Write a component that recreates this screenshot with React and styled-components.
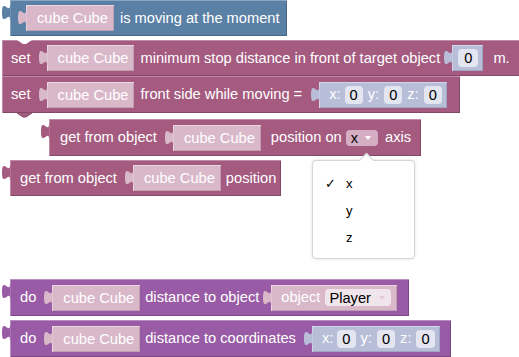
import React from 'react';
import styled, { createGlobalStyle } from 'styled-components';

const palette = {
  blue: { base: '#5b80a5', dark: '#476585', light: '#8aa5c1' },
  magenta: { base: '#a55b80', dark: '#834866', light: '#c18ca7' },
  purple: { base: '#995ba5', dark: '#7a4884', light: '#b98dc2' },
  pink: { base: '#d9b8ca', dark: '#c19fb2', light: '#ead5e0' },
  lavender: { base: '#b8bed8', dark: '#9fa6c4', light: '#d2d6e8' },
};

const GlobalStyle = createGlobalStyle`
  body {
    margin: 0;
    background: #fff;
  }
`;

const Workspace = styled.div`
  position: relative;
  width: 519px;
  height: 357px;
  overflow: hidden;
  background: #fff;
  display: flex;
  flex-direction: column;
  align-items: flex-start;
  font-family: "Liberation Sans", Arial, sans-serif;
  font-size: 11pt;
  color: #fff;
`;

const Block = styled.div`
  position: relative;
  display: flex;
  align-items: center;
  box-sizing: border-box;
  height: ${({ $h }) => $h || 36}px;
  margin-left: ${({ $x }) => $x}px;
  margin-top: ${({ $mt }) => $mt || 0}px;
  padding: 0 ${({ $pr }) => $pr || 6}px 0 ${({ $pl }) => $pl || 10}px;
  background: ${({ $kind }) => palette[$kind].base};
  box-shadow: inset 1px 1px 0 ${({ $kind }) => palette[$kind].light},
    inset -1px -1px 0 ${({ $kind }) => palette[$kind].dark};
  white-space: nowrap;
`;

const Stack = styled.div`
  display: flex;
  flex-direction: column;
  align-items: flex-start;
`;

const TabShape = styled.svg`
  position: absolute;
  left: -8px;
  top: 5px;
  overflow: visible;
`;

const NotchShape = styled.svg`
  position: absolute;
  left: 15px;
  overflow: visible;
  z-index: 2;
  ${({ $bottom }) => ($bottom ? 'bottom: -4px;' : 'top: 0;')}
`;

const Label = styled.span`
  margin-left: ${({ $ml }) => $ml || 0}px;
  line-height: 1;
`;

const Value = styled.div`
  position: relative;
  display: flex;
  align-items: center;
  height: 26px;
  box-sizing: border-box;
  margin-left: ${({ $ml }) => $ml || 0}px;
  padding: 0 ${({ $pr }) => ($pr !== undefined ? $pr : 6)}px 0 ${({ $pl }) => ($pl !== undefined ? $pl : 11)}px;
  background: ${({ $tone }) => palette[$tone].base};
  box-shadow: inset 1px 1px 0 ${({ $tone }) => palette[$tone].light},
    inset -1px -1px 0 ${({ $tone }) => palette[$tone].dark};
`;

const NumField = styled.span`
  display: inline-flex;
  align-items: center;
  justify-content: center;
  height: 18px;
  margin-left: ${({ $ml }) => $ml || 0}px;
  padding: 0 ${({ $pad }) => $pad || 5}px;
  border-radius: 4px;
  background: #e3e5f0;
  color: #000;
`;

const DropField = styled.span`
  display: inline-flex;
  align-items: center;
  height: ${({ $h }) => $h || 16}px;
  margin-left: ${({ $ml }) => $ml || 0}px;
  padding: 0 ${({ $pr }) => $pr || 6}px 0 ${({ $pl }) => $pl || 5}px;
  border-radius: 4px;
  background: ${({ $bg }) => $bg};
  color: #000;
`;

const Caret = styled.span`
  display: inline-block;
  width: 0;
  height: 0;
  margin-left: ${({ $ml }) => $ml || 7}px;
  border-left: 3px solid transparent;
  border-right: 3px solid transparent;
  border-top: 4px solid ${({ $color }) => $color};
`;

const Menu = styled.div`
  position: absolute;
  left: 312px;
  top: 160px;
  width: 103px;
  box-sizing: border-box;
  padding: 9px 0 7px;
  background: #fff;
  border: 1px solid #d6d6d6;
  border-radius: 4px;
  box-shadow: 0 0 3px rgba(0, 0, 0, 0.15);
  font-family: "Liberation Sans", Arial, sans-serif;
  font-size: 13px;
  color: #000;

  &::before {
    content: '';
    position: absolute;
    left: 48px;
    top: -6px;
    width: 10px;
    height: 10px;
    background: #fff;
    border-top: 1px solid #d6d6d6;
    border-left: 1px solid #d6d6d6;
    transform: rotate(45deg);
  }
`;

const MenuItem = styled.div`
  position: relative;
  display: flex;
  align-items: center;
  height: 27px;
  padding-left: 33px;
`;

const Check = styled.span`
  position: absolute;
  left: 12px;
  font-size: 13px;
`;

const Tab = ({ color }) => (
  <TabShape width="8" height="15" viewBox="0 0 8 15">
    <path d="M8.5,0 L8,0 C8,10 0,-8 0,7.5 C0,23 8,5 8,15 L8.5,15 Z" fill={color} />
  </TabShape>
);

const Notch = ({ bottom, color }) => (
  <NotchShape $bottom={bottom} width="15" height="4" viewBox="0 0 15 4">
    {bottom ? (
      <path d="M0,0 L6,4 L9,4 L15,0" fill={color} stroke={palette.magenta.dark} strokeWidth="1" />
    ) : (
      <path d="M0,0 L6,4 L9,4 L15,0 Z" fill="#fff" />
    )}
  </NotchShape>
);

const CubeInput = ({ ml }) => (
  <Value $tone="pink" $ml={ml}>
    <Tab color={palette.pink.base} />
    cube Cube
  </Value>
);

const VectorInput = ({ ml }) => (
  <Value $tone="lavender" $ml={ml} $pl={10} $pr={5}>
    <Tab color={palette.lavender.base} />
    <Label>x:</Label>
    <NumField $ml={4}>0</NumField>
    <Label $ml={5}>y:</Label>
    <NumField $ml={5}>0</NumField>
    <Label $ml={5}>z:</Label>
    <NumField $ml={5}>0</NumField>
  </Value>
);

const App = () => (
  <>
    <GlobalStyle />
    <Workspace>
      <Block $kind="blue" $x={10} $pl={16} $pr={7}>
        <Tab color={palette.blue.base} />
        <CubeInput />
        <Label $ml={6}>is moving at the moment</Label>
      </Block>

      <Stack>
        <Block $kind="magenta" $x={2} $mt={4} $pl={9} $pr={10}>
          <Notch />
          <Label>set</Label>
          <CubeInput ml={16} />
          <Label $ml={6}>minimum stop distance in front of target object</Label>
          <Value $tone="lavender" $ml={12} $pl={6} $pr={5}>
            <Tab color={palette.lavender.base} />
            <NumField $pad={6}>0</NumField>
          </Value>
          <Label $ml={10}>m.</Label>
        </Block>
        <Block $kind="magenta" $x={2} $h={37} $pl={9} $pr={13}>
          <Notch bottom color={palette.magenta.base} />
          <Label>set</Label>
          <CubeInput ml={16} />
          <Label $ml={6}>front side while moving =</Label>
          <VectorInput ml={17} />
        </Block>
      </Stack>

      <Block $kind="magenta" $x={49} $mt={6} $h={37} $pl={11} $pr={10}>
        <Tab color={palette.magenta.base} />
        <Label>get from object</Label>
        <CubeInput ml={16} />
        <Label $ml={10}>position on</Label>
        <DropField $ml={4} $bg="#d5aec3" $pr={7}>
          x
          <Caret $color="#fff" />
        </DropField>
        <Label $ml={7}>axis</Label>
      </Block>

      <Block $kind="magenta" $x={10} $mt={4} $pl={10} $pr={5}>
        <Tab color={palette.magenta.base} />
        <Label>get from object</Label>
        <CubeInput ml={16} />
        <Label $ml={5}>position</Label>
      </Block>

      <Block $kind="purple" $x={10} $mt={83} $h={37} $pl={10} $pr={12}>
        <Tab color={palette.purple.base} />
        <Label>do</Label>
        <CubeInput ml={16} />
        <Label $ml={5}>distance to object</Label>
        <Value $tone="pink" $ml={12} $pl={10} $pr={6}>
          <Tab color={palette.pink.base} />
          <Label>object</Label>
          <DropField $ml={5} $pl={4} $h={17} $bg="#f1e5ec">
            Player
            <Caret $ml={8} $color="#e2c9d6" />
          </DropField>
        </Value>
      </Block>

      <Block $kind="purple" $x={10} $mt={4} $h={37} $pl={10} $pr={11}>
        <Tab color={palette.purple.base} />
        <Label>do</Label>
        <CubeInput ml={16} />
        <Label $ml={5}>distance to coordinates</Label>
        <VectorInput ml={16} />
      </Block>

      <Menu>
        <MenuItem>
          <Check>✓</Check>x
        </MenuItem>
        <MenuItem>y</MenuItem>
        <MenuItem>z</MenuItem>
      </Menu>
    </Workspace>
  </>
);

export default App;
